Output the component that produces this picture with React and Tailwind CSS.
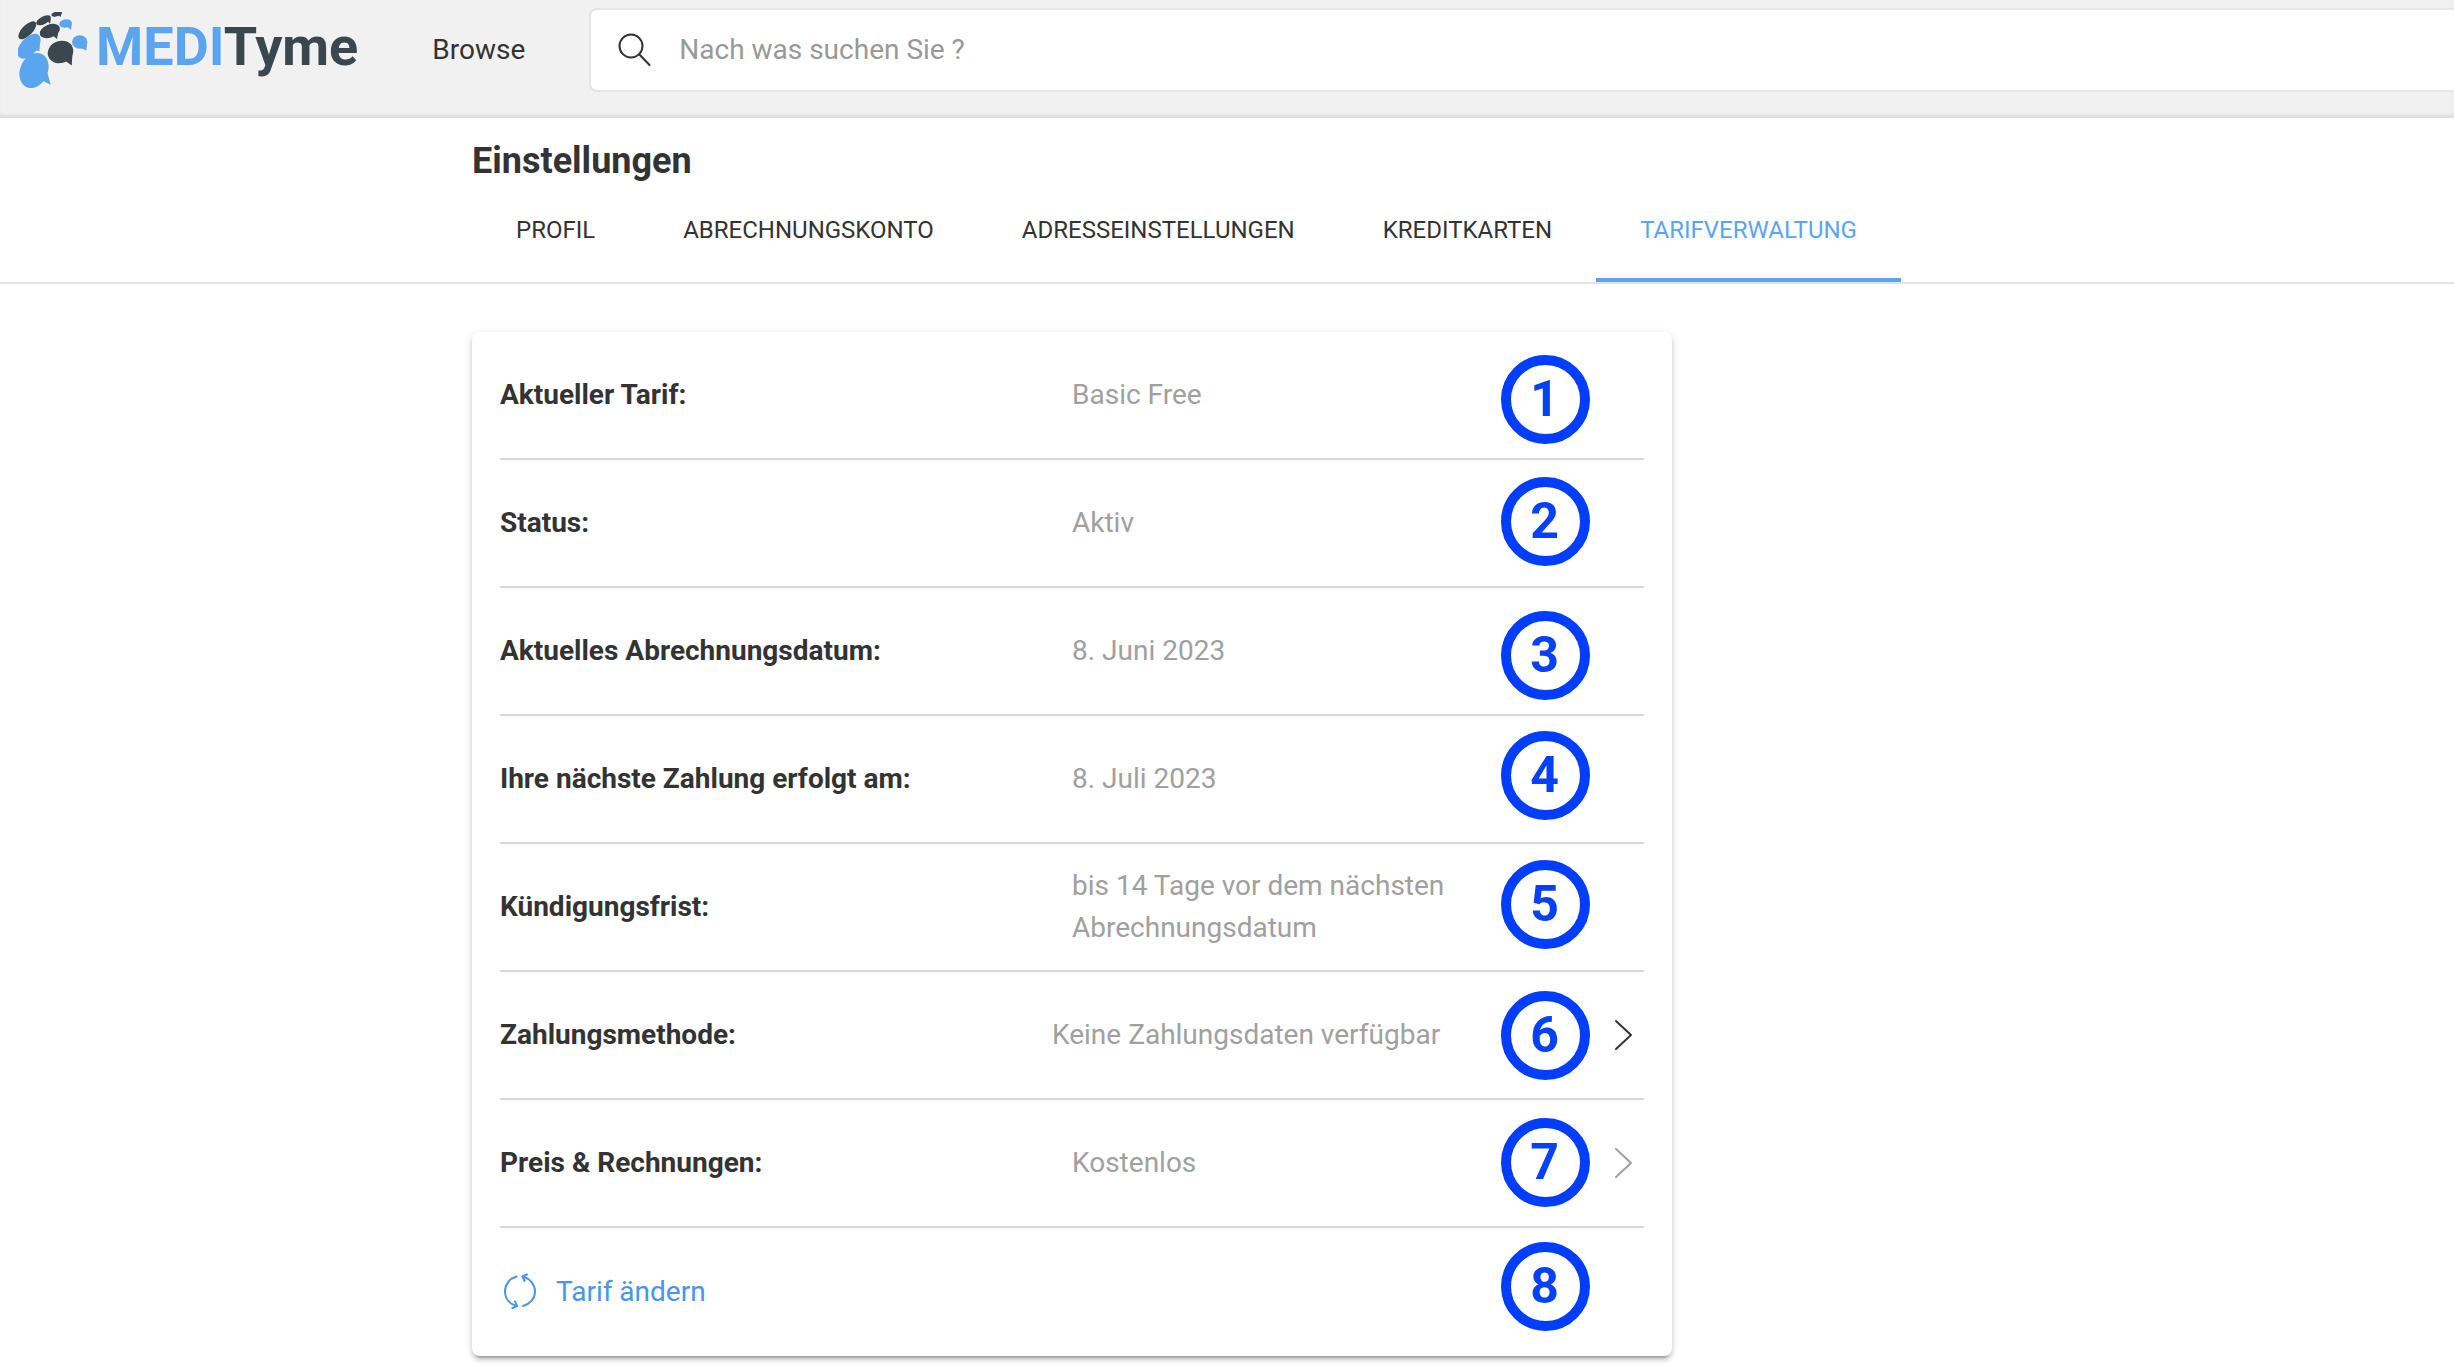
import { useState } from "react";

const tabs = [
  "Profil",
  "Abrechnungskonto",
  "Adresseinstellungen",
  "Kreditkarten",
  "Tarifverwaltung",
];

const rows = [
  { label: "Aktueller Tarif:", value: "Basic Free" },
  { label: "Status:", value: "Aktiv" },
  { label: "Aktuelles Abrechnungsdatum:", value: "8. Juni 2023" },
  { label: "Ihre nächste Zahlung erfolgt am:", value: "8. Juli 2023" },
  {
    label: "Kündigungsfrist:",
    value: "bis 14 Tage vor dem nächsten Abrechnungsdatum",
  },
  {
    label: "Zahlungsmethode:",
    value: "Keine Zahlungsdaten verfügbar",
    valueClass: "-ml-5",
    arrow: "text-[#333333]",
  },
  { label: "Preis & Rechnungen:", value: "Kostenlos", arrow: "text-[#a0a0a0]" },
];

// numbered help markers, placed freely over the card
const markers = [
  "top-[23px]",
  "top-[145px]",
  "top-[279px]",
  "top-[399px]",
  "top-[528px]",
  "top-[659px]",
  "top-[786px]",
  "top-[910px]",
];

const Logo = () => (
  <a href="#" className="flex items-center gap-1.5 shrink-0">
    <svg width="72" height="76" viewBox="0 0 72 76" aria-hidden="true">
      <g fill="#3a474e">
        <ellipse cx="9.3" cy="18.3" rx="11.5" ry="5.2" transform="rotate(-45 9.3 18.3)" />
        <ellipse cx="25.5" cy="8.3" rx="8" ry="3.8" transform="rotate(-28 25.5 8.3)" />
        <path d="M29 8L33 6L32 12Z" />
        <ellipse cx="38.5" cy="2" rx="5.2" ry="2.3" transform="rotate(-15 38.5 2)" />
        <path d="M38 0L44 0L42.5 5L40 3Z" />
        <ellipse cx="31.8" cy="19" rx="10.6" ry="6.4" transform="rotate(-22 31.8 19)" />
        <path d="M34 23L40.5 19L39 27Z" />
        <ellipse cx="42.5" cy="40" rx="13" ry="11" transform="rotate(-22 42.5 40)" />
        <path d="M46 48L54.5 42L53.7 53.5Z" />
      </g>
      <g fill="#5ba5ef">
        <ellipse cx="47.5" cy="11.5" rx="6.3" ry="4.2" transform="rotate(-12 47.5 11.5)" />
        <path d="M49 14.5L54 10L53 18Z" />
        <ellipse cx="61.7" cy="30" rx="7.7" ry="6.7" />
        <path d="M63 36L69.2 31L68.3 38.5Z" />
        <ellipse cx="11" cy="34.2" rx="14.8" ry="8.4" transform="rotate(-49 11 34.2)" />
        <path d="M15 38L22 29L21.5 39Z" />
        <ellipse cx="16" cy="58.5" rx="18.2" ry="13.8" transform="rotate(-66 16 58.5)" />
        <path d="M23 68L29.5 61L32.7 72.7Z" />
      </g>
    </svg>
    <span className="pb-1.5 text-[54px] leading-[60px] font-bold text-[#3a474e]">
      <span className="text-[#5ba5ef]">MEDI</span>Tyme
    </span>
  </a>
);

const SearchIcon = () => (
  <svg
    width="36"
    height="36"
    viewBox="0 0 36 36"
    fill="none"
    stroke="#333333"
    strokeWidth="2"
    strokeLinecap="round"
    aria-hidden="true"
  >
    <circle cx="14" cy="14" r="11.5" />
    <path d="M22.2 22.2L32.5 33" />
  </svg>
);

const ChevronIcon = () => (
  <svg
    width="20"
    height="32"
    viewBox="0 0 20 32"
    fill="none"
    stroke="currentColor"
    strokeWidth="2"
    strokeLinecap="round"
    strokeLinejoin="round"
    aria-hidden="true"
  >
    <path d="M3 2L18 16L3 30" />
  </svg>
);

const RefreshIcon = () => (
  <svg
    width="40"
    height="40"
    viewBox="0 0 40 40"
    fill="none"
    stroke="currentColor"
    strokeWidth="2"
    strokeLinecap="round"
    strokeLinejoin="round"
    aria-hidden="true"
  >
    <path d="M16.5 4.5C9.5 6.5 5 12.5 5 19.5C5 26.5 9.5 32 17 34" />
    <path d="M23 34C30 32 35 26.5 35 19.5C35 12.5 30 6.5 22.5 4.5" />
    <path d="M15 29.5L17 34L12.5 36" />
    <path d="M27 2.5L22.5 4.5L24.5 9" />
  </svg>
);

const Header = () => {
  const [query, setQuery] = useState("");

  return (
    <header className="flex items-start bg-[#f1f1f1] h-[118px] pl-[18px] shadow-[inset_0_-4px_4px_-2px_rgba(0,0,0,0.12)]">
      <div className="flex items-center h-[100px] gap-[74px] pr-16">
        <Logo />
        <a href="#" className="text-[28px] leading-[42px] text-[#333333]">
          Browse
        </a>
      </div>
      <label className="flex flex-1 items-center gap-[26px] h-[84px] mt-2 pl-[26px] bg-white border-2 border-r-0 border-[#e5e5e5] rounded-l-lg">
        <SearchIcon />
        <input
          type="search"
          value={query}
          onChange={(e) => setQuery(e.target.value)}
          placeholder="Nach was suchen Sie ?"
          aria-label="Suche"
          className="flex-1 text-[28px] leading-[42px] text-[#333333] placeholder:text-[#999999] outline-none"
        />
      </label>
    </header>
  );
};

const App = () => {
  const [active, setActive] = useState("Tarifverwaltung");

  return (
    <div className="min-h-screen bg-white font-[Roboto,sans-serif] text-[#333333]">
      <Header />

      <div className="border-b-2 border-[#e3e3e3]">
        <div className="max-w-[1510px] mx-auto pt-[22px]">
          <h1 className="text-[36px] leading-[42px] font-bold">Einstellungen</h1>
          <nav className="flex">
            {tabs.map((tab) => (
              <a
                key={tab}
                href="#"
                onClick={() => setActive(tab)}
                className={`px-11 py-[30px] border-b-4 text-2xl leading-9 uppercase ${
                  tab === active
                    ? "border-[#5ba5ef] text-[#5ba5ef]"
                    : "border-transparent"
                }`}
              >
                {tab}
              </a>
            ))}
          </nav>
        </div>
      </div>

      <main className="max-w-[1510px] mx-auto pt-12">
        <section className="relative max-w-[1200px] px-7 rounded-lg bg-white text-[28px] leading-[42px] shadow-[0_6px_2px_-4px_rgba(0,0,0,0.2),0_4px_4px_0_rgba(0,0,0,0.14),0_2px_10px_0_rgba(0,0,0,0.12)]">
          <dl>
            {rows.map((row) => (
              <div
                key={row.label}
                className="grid grid-cols-2 items-center h-32 border-b-2 border-[#d8d8d8]"
              >
                <dt className="font-bold">{row.label}</dt>
                <dd className="flex items-center justify-between text-[#a0a0a0]">
                  <span className={`max-w-[400px] ${row.valueClass || ""}`}>
                    {row.value}
                  </span>
                  {row.arrow && (
                    <button
                      type="button"
                      aria-label={row.label}
                      className={`mr-[11px] ${row.arrow}`}
                    >
                      <ChevronIcon />
                    </button>
                  )}
                </dd>
              </div>
            ))}
          </dl>
          <div className="flex items-center h-32">
            <button
              type="button"
              className="flex items-center gap-4 text-[#4696ec]"
            >
              <RefreshIcon />
              Tarif ändern
            </button>
          </div>

          {markers.map((top, i) => (
            <span
              key={top}
              className={`absolute right-[82px] ${top} flex items-center justify-center size-[89px] pb-0.5 pr-0.5 rounded-full border-[10px] border-[#003efc] text-[50px] font-bold text-[#0541f6]`}
            >
              {i + 1}
            </span>
          ))}
        </section>
      </main>
    </div>
  );
};

export default App;
